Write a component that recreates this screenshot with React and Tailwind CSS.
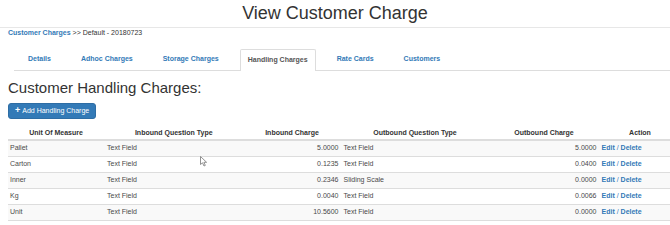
import React from 'react';

const tabs = ['Details', 'Adhoc Charges', 'Storage Charges', 'Handling Charges', 'Rate Cards', 'Customers'];

const rows = [
  { unit: 'Pallet', inType: 'Text Field', inCharge: '5.0000', outType: 'Text Field', outCharge: '5.0000' },
  { unit: 'Carton', inType: 'Text Field', inCharge: '0.1235', outType: 'Text Field', outCharge: '0.0400' },
  { unit: 'Inner', inType: 'Text Field', inCharge: '0.2346', outType: 'Sliding Scale', outCharge: '0.0000' },
  { unit: 'Kg', inType: 'Text Field', inCharge: '0.0040', outType: 'Text Field', outCharge: '0.0066' },
  { unit: 'Unit', inType: 'Text Field', inCharge: '10.5600', outType: 'Text Field', outCharge: '0.0000' },
];

const cols = 'grid grid-cols-[97px_138.5px_98px_148px_110px_82px]';

const App = () => {
  return (
    <div className="relative w-full h-[225px] overflow-hidden bg-white text-[#333] font-['Liberation_Sans',Arial,sans-serif]">
      {/* Page title */}
      <div className="h-[28px] pt-[3px] border-b border-[#e7e7e7] text-center">
        <h1 className="text-[18px] leading-[20px] font-normal">View Customer Charge</h1>
      </div>

      {/* Breadcrumb */}
      <div className="pl-[8px] text-[7px] leading-[10px]">
        <a className="font-bold text-[#337ab7]">Customer Charges</a>
        <span> &gt;&gt; Default - 20180723</span>
      </div>

      {/* Tabs */}
      <ul className="mt-[11px] ml-[14px] pl-[6px] flex gap-[14px] border-b border-[#ddd] h-[22px]">
        {tabs.map(t => {
          const active = t === 'Handling Charges';
          return (
            <li
              key={t}
              className={
                active
                  ? 'h-[22px] px-[7px] flex items-center bg-white border border-b-0 border-[#ddd] rounded-t-[2px] -ml-[1px] -mr-[1px] text-[7px] font-bold text-[#555]'
                  : 'h-[21px] px-[8px] flex items-center text-[7px] font-bold text-[#337ab7]'
              }
            >
              {t}
            </li>
          );
        })}
      </ul>

      <div className="px-[8px]">
        <h2 className="mt-[8px] text-[15px] leading-[18px] font-normal">Customer Handling Charges:</h2>

        <button className="mt-[6px] h-[16px] px-[6px] flex items-center gap-[2px] bg-[#337ab7] border border-[#2e6da4] rounded-[3px] text-white text-[7px]">
          <span className="font-bold text-[9px] leading-[9px] -mt-[1px]">+</span>
          <span>Add Handling Charge</span>
        </button>

        {/* Table */}
        <div className="mt-[8px] -ml-[0.5px] w-[673.5px] text-[7px]">
          <div className={`${cols} h-[14px] border-b-2 border-[#ddd] font-bold`}>
            <div className="px-[2.5px] text-center leading-[12px]">Unit Of Measure</div>
            <div className="px-[2.5px] text-center leading-[12px]">Inbound Question Type</div>
            <div className="px-[2.5px] text-center leading-[12px]">Inbound Charge</div>
            <div className="px-[2.5px] text-center leading-[12px]">Outbound Question Type</div>
            <div className="px-[2.5px] text-center leading-[12px]">Outbound Charge</div>
            <div className="px-[2.5px] text-center leading-[12px]">Action</div>
          </div>
          {rows.map((r, i) => (
            <div
              key={r.unit}
              className={`${cols} h-[16px] items-center border-b border-[#ddd] text-[#4a4a4a] ${i % 2 === 0 ? 'bg-[#f9f9f9]' : 'bg-white'}`}
            >
              <div className="px-[2.5px]">{r.unit}</div>
              <div className="px-[2.5px]">{r.inType}</div>
              <div className="px-[2.5px] text-right">{r.inCharge}</div>
              <div className="px-[2.5px]">{r.outType}</div>
              <div className="px-[2.5px] text-right">{r.outCharge}</div>
              <div className="px-[2.5px] font-bold text-[#337ab7]">
                Edit <span className="font-normal">/</span> Delete
              </div>
            </div>
          ))}
        </div>
      </div>

      {/* mouse pointer */}
      <svg className="absolute left-[200px] top-[156px]" width="8" height="11" viewBox="0 0 8 11">
        <path d="M0.5 0.5 L0.5 8.5 L2.5 6.8 L4 10 L5.3 9.4 L3.9 6.3 L6.6 6.3 Z" fill="#fff" stroke="#777" strokeWidth="0.8" strokeLinejoin="round" />
      </svg>
    </div>
  );
};

export default App;
